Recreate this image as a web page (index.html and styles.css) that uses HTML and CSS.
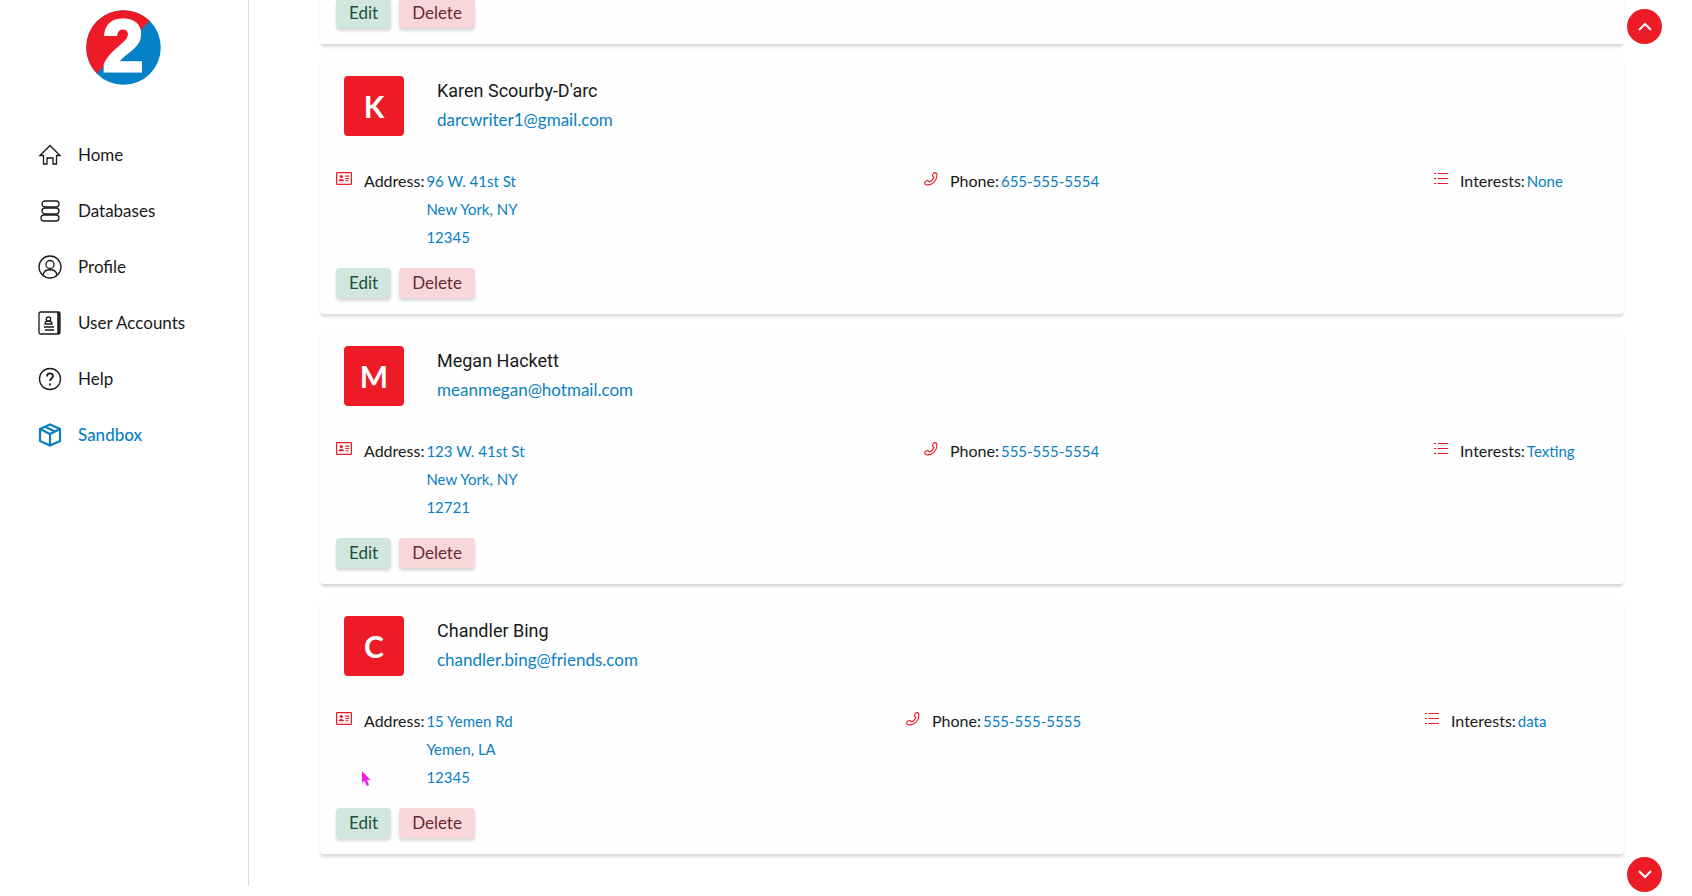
FILE: index.html
```html
<!DOCTYPE html>
<html lang="en">
<head>
<meta charset="utf-8">
<meta name="viewport" content="width=device-width, initial-scale=1">
<title>Sandbox</title>
<link rel="stylesheet" href="styles.css">
</head>
<body>
<svg class="sprite" aria-hidden="true">
  <symbol id="i-card" viewBox="0 0 16 13"><rect x=".6" y=".6" width="14.8" height="11.8" rx=".6" fill="none" stroke="currentColor" stroke-width="1.2"/><circle cx="5.3" cy="4.6" r="1.6" fill="currentColor"/><path d="M2.6 9.2c0-3 5.4-3 5.4 0zM9.3 3.4h4v1.3h-4zM9.3 5.9h4v1.2h-4zM9.3 8.3h3v1h-3z" fill="currentColor"/></symbol>
  <symbol id="i-phone" viewBox="0 0 14 14"><path d="M9.4 1.1l2.2-.5c.8.2 1.3 1.4 1.3 2.7C12.9 8.6 8.6 12.9 3.3 12.9 2 12.9.9 12.3.7 11.6l.5-2.2 2.7-1.1 1.5 1.7C7.4 9.1 9.1 7.4 10 5.4L8.3 3.9z" fill="none" stroke="currentColor" stroke-width="1.1" stroke-linejoin="round"/></symbol>
  <symbol id="i-list" viewBox="0 0 14 13"><path d="M0 1.500h2M0 6.500h2M0 11.500h2M3.500 1.500H14M3.500 6.500H14M3.500 11.500H14" stroke="currentColor" stroke-width="1.200"/></symbol>
</svg>
<div class="layout">
  <aside class="sidebar">
    <a class="logo" href="#" aria-label="Home page">
      <svg viewBox="0 0 75 75" width="75" height="75">
        <defs><clipPath id="disc"><circle cx="37.5" cy="37.5" r="37.3"/></clipPath></defs>
        <g clip-path="url(#disc)"><rect width="75" height="75" fill="#0681c8"/><path d="M0 0H75L9 65L0 75z" fill="#ec1b26"/></g>
        <text x="37" y="61" class="logo-text" text-anchor="middle">2</text>
      </svg>
    </a>
    <nav class="nav">
      <a href="#"><svg class="nav-icon" viewBox="0 0 24 24"><path d="M2 12.500L12 2.500l10 10h-3.500V21H15v-6H9v6H5.500v-8.500z"/></svg>Home</a>
      <a href="#"><svg class="nav-icon" viewBox="0 0 24 24"><rect x="4" y="2" width="17" height="6" rx="3"/><rect x="4" y="9" width="17" height="6" rx="3"/><rect x="3" y="16" width="18" height="6" rx="3"/></svg>Databases</a>
      <a href="#"><svg class="nav-icon" viewBox="0 0 24 24"><circle cx="12" cy="12" r="11"/><circle cx="12" cy="9.500" r="4"/><path d="M5 20c1-7 13-7 14 0"/></svg>Profile</a>
      <a href="#"><svg class="nav-icon" viewBox="0 0 24 24"><rect x="1" y="1" width="21" height="22" rx="1.500"/><path d="M20.500 1v22" stroke-width="2.500"/><circle cx="10.500" cy="8" r="2.200"/><path d="M7 13c0-4 7-4 7 0zM6 16h10M7 19h9"/></svg>User Accounts</a>
      <a href="#"><svg class="nav-icon" viewBox="0 0 24 24"><circle cx="12" cy="12" r="10.500"/><path d="M9 9.500c0-4 6-4 6-.5 0 2.500-3 2.500-3 5M12 16.500v2" stroke-width="1.800"/></svg>Help</a>
      <a href="#" class="active" aria-current="page"><svg class="nav-icon" viewBox="0 0 24 24"><path d="M12 1.500L22 6v12l-10 4.500L2 18V6zM2 6l10 5 10-5M12 11v11.500M7 3.800l10 4.700" stroke-width="2.200"/></svg>Sandbox</a>
    </nav>
  </aside>
  <main class="cards">
    <article class="card">
      <div class="actions"><button class="btn edit" type="button">Edit</button><button class="btn delete" type="button">Delete</button></div>
    </article>
    <article class="card">
      <header class="person"><span class="avatar">K</span><div><h2>Karen Scourby-D'arc</h2><a class="email" href="#">darcwriter1@gmail.com</a></div></header>
      <div class="details">
        <div class="field"><svg class="icon card-icon"><use href="#i-card"/></svg><span class="label">Address:</span><address>96 W. 41st St<br>New York, NY<br>12345</address></div>
        <div class="field"><svg class="icon phone-icon"><use href="#i-phone"/></svg><span class="label">Phone:</span><a href="#">655-555-5554</a></div>
        <div class="field"><svg class="icon list-icon"><use href="#i-list"/></svg><span class="label">Interests:</span><span class="value">None</span></div>
      </div>
      <div class="actions"><button class="btn edit" type="button">Edit</button><button class="btn delete" type="button">Delete</button></div>
    </article>
    <article class="card">
      <header class="person"><span class="avatar">M</span><div><h2>Megan Hackett</h2><a class="email" href="#">meanmegan@hotmail.com</a></div></header>
      <div class="details">
        <div class="field"><svg class="icon card-icon"><use href="#i-card"/></svg><span class="label">Address:</span><address>123 W. 41st St<br>New York, NY<br>12721</address></div>
        <div class="field"><svg class="icon phone-icon"><use href="#i-phone"/></svg><span class="label">Phone:</span><a href="#">555-555-5554</a></div>
        <div class="field"><svg class="icon list-icon"><use href="#i-list"/></svg><span class="label">Interests:</span><span class="value">Texting</span></div>
      </div>
      <div class="actions"><button class="btn edit" type="button">Edit</button><button class="btn delete" type="button">Delete</button></div>
    </article>
    <article class="card">
      <header class="person"><span class="avatar">C</span><div><h2>Chandler Bing</h2><a class="email" href="#">chandler.bing@friends.com</a></div></header>
      <div class="details compact">
        <div class="field"><svg class="icon card-icon"><use href="#i-card"/></svg><span class="label">Address:</span><address>15 Yemen Rd<br>Yemen, LA<br>12345</address></div>
        <div class="field"><svg class="icon phone-icon"><use href="#i-phone"/></svg><span class="label">Phone:</span><a href="#">555-555-5555</a></div>
        <div class="field"><svg class="icon list-icon"><use href="#i-list"/></svg><span class="label">Interests:</span><span class="value">data</span></div>
      </div>
      <div class="actions"><button class="btn edit" type="button">Edit</button><button class="btn delete" type="button">Delete</button></div>
    </article>
  </main>
</div>
<button class="fab up" type="button" aria-label="Scroll up"><svg viewBox="0 0 14 9"><path d="M1 8l6-6 6 6"/></svg></button>
<button class="fab down" type="button" aria-label="Scroll down"><svg viewBox="0 0 14 9"><path d="M1 1l6 6 6-6"/></svg></button>
<svg class="pointer" viewBox="0 0 10 16" aria-hidden="true"><path d="M1 0v12l2.500-2L6 15l2-1-2-5h3.500z"/></svg>
</body>
</html>
```

FILE: styles.css
```css
* { box-sizing: border-box; }
body {
  margin: 0;
  background: #fff;
  color: #191919;
  font: 400 16px/28px Lato, "Open Sans", sans-serif;
  overflow-x: hidden;
}
a { color: inherit; text-decoration: none; }
.sprite { position: absolute; width: 0; height: 0; }
.layout { display: flex; align-items: flex-start; overflow: hidden; }

.sidebar {
  flex: 0 0 249px;
  min-height: calc(100vh - 10px);
  border-right: 1px solid #dcdcdc;
  padding-top: 10px;
}
.logo { display: block; width: 75px; height: 75px; margin-left: 86px; }
.logo svg { display: block; overflow: visible; }
.logo-text { font: 700 73px "Liberation Sans", sans-serif; fill: #fff; stroke: #fff; stroke-width: 3px; }
.nav { display: flex; flex-direction: column; margin-top: 42px; }
.nav a {
  display: flex;
  align-items: center;
  gap: 16px;
  height: 56px;
  padding-left: 38px;
  font-size: 17px;
}
.nav .active { color: #0a80c2; font-weight: 500; }
.nav-icon { width: 24px; height: 24px; fill: none; stroke: currentColor; stroke-width: 1.3px; }

.cards {
  flex: 1;
  display: flex;
  flex-direction: column;
  gap: 16px;
  margin-top: -18px;
  padding: 0 68px 32px 71px;
}
.card {
  padding: 16px;
  border-radius: 4px;
  background: #fefefe;
  box-shadow: 0 4px 3px -1px rgba(0, 0, 0, .14), 0 0 1px rgba(0, 0, 0, .1);
}
.person { display: flex; gap: 33px; padding-left: 8px; }
.avatar {
  width: 60px;
  height: 60px;
  border-radius: 4px;
  background: #ec1b26;
  color: #fff;
  font: 700 30px/60px Lato, sans-serif;
  text-align: center;
}
h2 { margin: 0; font: 400 18px/29px Roboto, sans-serif; }
.email { display: block; font-size: 17px; line-height: 30px; }
.email, .field a, address, .value { color: #0a80c2; font-style: normal; }
.field a, address, .value { font-size: 15px; }
.details { display: grid; grid-template-columns: 588fr 510fr 174fr; margin-top: 31px; }
.compact { grid-template-columns: 570fr 519fr 183fr; }
.field { display: flex; align-items: flex-start; white-space: nowrap; }
.label { margin: 0 2px 0 12px; }
.icon { flex: none; color: #ec1b26; }
.card-icon { width: 16px; height: 13px; margin-top: 5px; }
.phone-icon { width: 14px; height: 14px; margin-top: 5px; }
.list-icon { width: 14px; height: 13px; margin-top: 5px; }
.actions { display: flex; gap: 8px; margin-top: 17px; }
.card > .actions:first-child { margin-top: 0; }
.btn {
  height: 30px;
  padding: 0 13px;
  border: 0;
  border-radius: 4px;
  font: 400 17px/28px Lato, sans-serif;
  box-shadow: 0 3px 3px rgba(0, 0, 0, .14);
}
.edit { background: #d1e7dd; color: #23503c; }
.delete { background: #f8d7da; color: #682b31; }

.fab {
  position: fixed;
  right: 30px;
  width: 35px;
  height: 35px;
  padding: 0;
  border: 0;
  border-radius: 50%;
  background: #ec1b26;
  display: grid;
  place-items: center;
}
.fab svg { width: 14px; height: 9px; fill: none; stroke: #fff; stroke-width: 2px; }
.up { top: 9px; }
.down { bottom: 4px; }
.pointer { position: absolute; left: 361px; top: 771px; width: 10px; height: 16px; fill: #f41ce8; }
```
